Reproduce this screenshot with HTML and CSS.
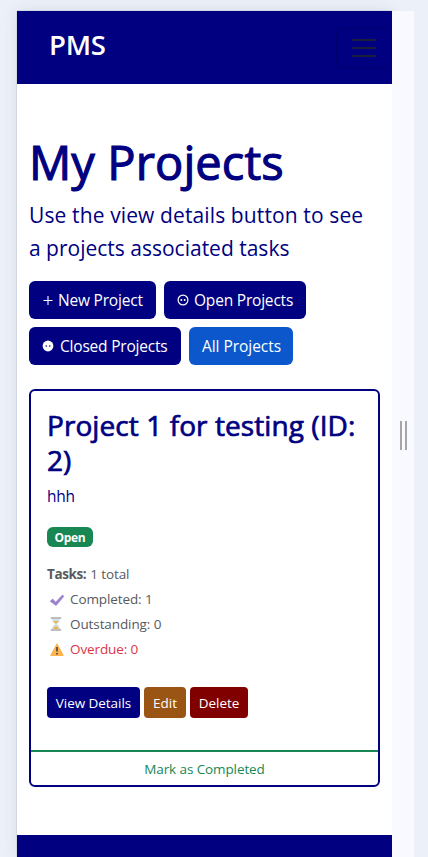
FILE: index.html
```
<!DOCTYPE html>
<html lang="en">
<head>
<meta charset="utf-8">
<title>PMS</title>
<link rel="stylesheet" href="styles.css">
</head>
<body>
<div class="device">
  <div class="page">
    <header class="navbar">
      <span class="brand">PMS</span>
      <button class="toggler" aria-label="Menu"><svg width="30" height="30" viewBox="0 0 30 30"><path d="M4 7h22M4 15h22M4 23h22" stroke="#212529" stroke-opacity=".8" stroke-width="2" stroke-linecap="round"/></svg></button>
    </header>
    <main class="content">
      <h1 class="title">My Projects</h1>
      <p class="lead"><span class="lead-a">Use the view details button to see</span><br><span class="lead-b">a projects associated tasks</span></p>
      <div class="filters">
        <button class="btn w-new"><svg class="ico" width="10" height="16" viewBox="0 0 10 16"><path d="M5 4v9M.5 8.5h9" stroke="#fff" stroke-width="1.1"/></svg><span>New Project</span></button>
        <button class="btn w-open"><svg class="ico" width="12" height="16" viewBox="0 0 12 16"><circle cx="6" cy="8" r="4.9" fill="none" stroke="#fff" stroke-width="1.2"/><circle cx="4.3" cy="8" r="1" fill="#fff"/><circle cx="7.7" cy="8" r="1" fill="#fff"/></svg><span>Open Projects</span></button>
        <button class="btn w-closed"><svg class="ico" width="12" height="16" viewBox="0 0 12 16"><circle cx="6" cy="8" r="5.4" fill="#fff"/><circle cx="4.3" cy="8" r=".8" fill="#000080"/><circle cx="7.7" cy="8" r=".8" fill="#000080"/></svg><span>Closed Projects</span></button>
        <button class="btn w-all"><span>All Projects</span></button>
      </div>
      <article class="card">
        <div class="card-body">
          <h2 class="card-title">Project 1 for testing (ID:<br>2)</h2>
          <p class="desc">hhh</p>
          <span class="badge">Open</span>
          <div class="tasks">
            <div class="row"><b>Tasks:</b><span>1 total</span></div>
            <div class="row item"><svg width="16" height="16" viewBox="0 0 16 16"><path d="M1.2 10.2 3.7 8l3 3.2L13.4 4l1.5 1.3-7.8 9.3z" fill="#9c83cf" stroke="#8368b5" stroke-width=".5"/></svg><span>Completed: 1</span></div>
            <div class="row item"><svg class="glass" width="16" height="16" viewBox="0 0 16 16"><path d="M4 3h8c0 3-2 4-3.3 5C10 9 12 10 12 13H4c0-3 2-4 3.3-5C6 7 4 6 4 3z" fill="#cfe2ec"/><path d="M5.2 5h5.6L8 8zM4.7 13 8 9.5l3.3 3.5z" fill="#f0b653"/><path d="M2.8 2h10.4M2.8 14h10.4" stroke="#a9aaa8" stroke-width="1.5"/></svg><span>Outstanding: 0</span></div>
            <div class="row item late"><svg width="16" height="16" viewBox="0 0 16 16"><path d="M8 2.8 14.3 14.5H1.7z" fill="#fdb44d" stroke="#fdb44d" stroke-linejoin="round"/><path d="M8 6v4.6M8 11.9v1.6" stroke="#3d3a4b" stroke-width="1.5"/></svg><span>Overdue: 0</span></div>
          </div>
          <div class="actions">
            <button class="sm view">View Details</button>
            <button class="sm edit">Edit</button>
            <button class="sm del">Delete</button>
          </div>
        </div>
        <button class="complete">Mark as Completed</button>
      </article>
    </main>
    <footer class="footer"></footer>
  </div>
  <div class="handle"><i></i><i></i></div>
</div>
</body>
</html>
```
FILE: styles.css
```
* { box-sizing: border-box; }
body {
  margin: 0;
  height: 857px;
  overflow: hidden;
  background: #ebf0f9;
  font-family: "Open Sans", "Noto Sans", sans-serif;
  color: #000080;
}
button { font-family: inherit; margin: 0; padding: 0; border: 0; white-space: nowrap; }
h1, h2, p { margin: 0; font-weight: 400; white-space: nowrap; }
.device { display: flex; padding: 11px 14px 0 17px; height: 857px; }
.page {
  width: 375px;
  height: 846px;
  background: #fff;
  box-shadow: 0 0 1px rgba(0,0,0,.4), 0 0 14px rgba(80,90,100,.12);
}
.handle {
  width: 22px;
  height: 857px;
  background: #f8faff;
  display: flex;
  justify-content: center;
  gap: 3px;
  padding-top: 410px;
  position: relative;
}
.handle i { width: 2px; height: 29px; background: #a5a5a5; }
.navbar {
  height: 73px;
  background: #000080;
  display: flex;
  justify-content: space-between;
  padding-left: 32px;
}
.brand { color: #fff; font-size: 27.5px; font-weight: 600; line-height: 38px; margin-top: 15px; letter-spacing: -.2px; }
.toggler {
  width: 56px;
  height: 40px;
  margin-top: 17px;
  background: none;
  border: 1px solid rgba(0,0,0,.15);
  border-radius: 6px;
  display: flex;
  align-items: center;
  justify-content: center;
}
.content { height: 751px; padding: 48px 12px 0; }
.title { font-size: 47px; line-height: 58px; letter-spacing: .1px; margin: 1px 0 8px; -webkit-text-stroke: 1.1px #000080; }
.lead { font-size: 21px; line-height: 33px; }
.lead-a { letter-spacing: .12px; }
.filters { display: flex; flex-wrap: wrap; gap: 8px; margin-top: 16px; margin-right: -1px; }
.btn {
  height: 38px;
  border-radius: 6px;
  background: #000080;
  color: #fff;
  font-size: 15.5px;
  letter-spacing: -.2px;
  display: flex;
  align-items: center;
  padding-left: 13px;
  gap: 5px;
}
.w-new { width: 127px; padding-left: 14px; }
.w-open { width: 142px; }
.w-closed { width: 152px; gap: 6px; }
.w-all { width: 104px; background: #0b57cb; letter-spacing: -.05px; }
.card {
  width: 351px;
  height: 398px;
  margin-top: 24px;
  border: 2px solid #000080;
  border-radius: 6px;
}
.card-body { height: 359px; padding: 17px 16px 0; }
.card-title { font-size: 28px; line-height: 35px; letter-spacing: .08px; -webkit-text-stroke: .7px #000080; }
.desc { font-size: 15.5px; line-height: 24px; margin-top: 6px; letter-spacing: -.2px; }
.badge {
  display: flex;
  align-items: center;
  justify-content: center;
  width: 46px;
  height: 20px;
  margin-top: 19px;
  background: #198754;
  border-radius: 6px;
  color: #fff;
  font-size: 12px;
  font-weight: 700;
  letter-spacing: -.3px;
}
.tasks { margin-top: 14px; font-size: 13.5px; color: #575a5d; }
.row { height: 25px; display: flex; align-items: center; gap: 4px; letter-spacing: -.1px; }
.row b { letter-spacing: -.4px; }
.item { padding-left: 2px; gap: 5px; }
.glass { margin-left: -1px; margin-right: 1px; }
.late { color: #dc3545; }
.actions { display: flex; gap: 4px; margin-top: 26px; }
.sm { height: 31px; border-radius: 4px; color: #fff; font-size: 13.5px; letter-spacing: -.05px; }
.view { width: 93px; background: #000080; }
.edit { width: 42px; background: #9a5514; }
.del { width: 58px; background: #800000; }
.complete {
  width: 100%;
  height: 35px;
  border-top: 2px solid #198754;
  background: none;
  color: #198754;
  font-size: 13.5px;
  letter-spacing: -.1px;
  display: block;
}
.footer { height: 22px; background: #000080; }
```
